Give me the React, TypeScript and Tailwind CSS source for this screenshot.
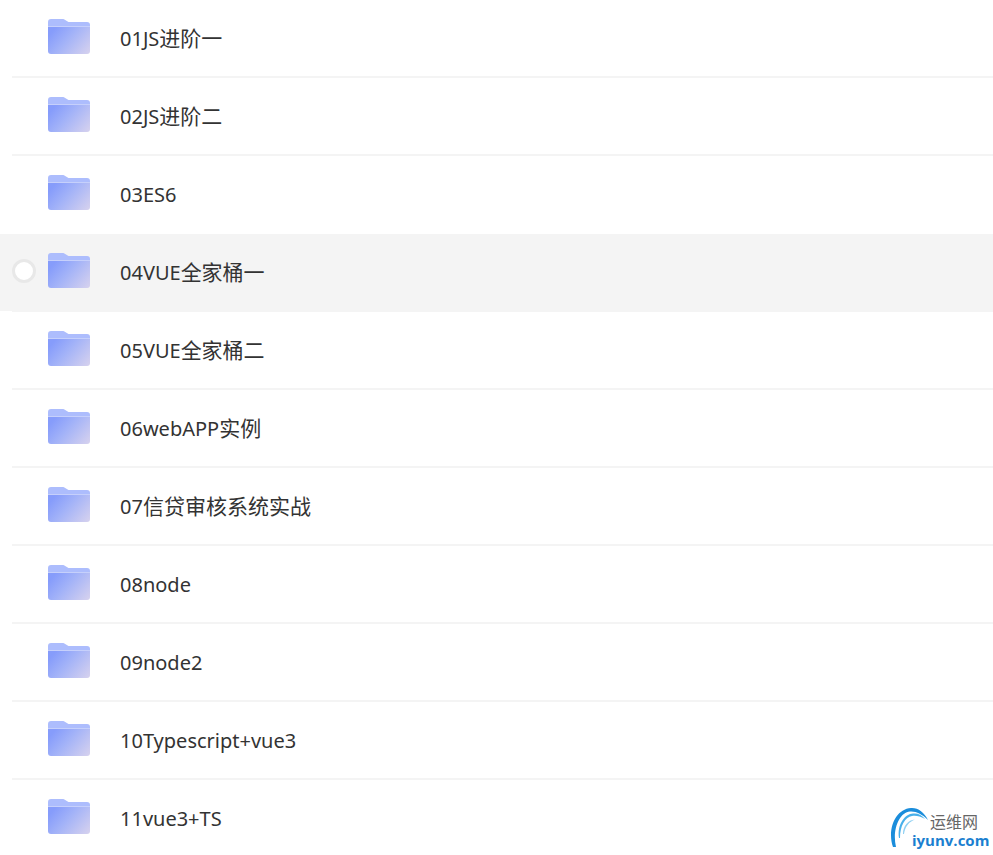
import React from "react";

const rows = [
  "01JS进阶一",
  "02JS进阶二",
  "03ES6",
  "04VUE全家桶一",
  "05VUE全家桶二",
  "06webAPP实例",
  "07信贷审核系统实战",
  "08node",
  "09node2",
  "10Typescript+vue3",
  "11vue3+TS",
];

function Folder({ id }: { id: number }) {
  return (
    <svg width="42" height="35" viewBox="0 0 42 35" className="mb-[3px] block shrink-0">
      <defs>
        <linearGradient id={`f${id}`} x1="0.02" y1="0.3" x2="1" y2="0.85">
          <stop offset="0" stopColor="#869cfb" />
          <stop offset="0.4" stopColor="#a2b2f8" />
          <stop offset="1" stopColor="#d2cfef" />
        </linearGradient>
      </defs>
      <path d="M0 3a3 3 0 0 1 3-3h11c2 0 3 .6 4 1.600L20.500 3H39a3 3 0 0 1 3 3V12H0z" fill="#adbdfd" />
      <path d="M0 8h42V32a3 3 0 0 1-3 3H3a3 3 0 0 1-3-3z" fill={`url(#f${id})`} />
      <rect x="0" y="7" width="42" height="1" fill="#c6d0fb" />
    </svg>
  );
}

function Label({ text }: { text: string }) {
  const parts = text.split(/([\u4e00-\u9fff]+)/).filter(Boolean);
  return (
    <span className="whitespace-nowrap">
      {parts.map((p, i) =>
        /[\u4e00-\u9fff]/.test(p) ? (
          <span key={i} className="text-[21px]">
            {p}
          </span>
        ) : (
          <span key={i}>{p}</span>
        )
      )}
    </span>
  );
}

function Logo() {
  return (
    <div className="absolute left-[889px] top-[806px] h-[46px] w-[104px]">
      <svg width="46" height="46" viewBox="0 0 46 46" className="absolute left-0 top-0">
        <path d="M4 41C-2 24 6 3 22 2C29 1.500 35 6 39 14C33 8 27 5 21 5.500C10 6.500 3 24 7 41Z" fill="#1b8ddb" />
        <path d="M10 32C8 18 16 8 24 7.500C29 7 33 9 36 13C31 10 27 9.500 23 10C16 11 11 20 11 32Z" fill="#48b0ea" />
        <path d="M14 28C14 20 19 14 26 13.500C20 15.500 16 21 15 28Z" fill="#8fd0f2" />
      </svg>
      <span className="absolute left-[41px] top-[7px] whitespace-nowrap text-[16px] leading-[16px] text-[#666] font-['Noto_Sans_CJK_SC',sans-serif]">
        运维网
      </span>
      <span className="absolute left-[23px] top-[26px] whitespace-nowrap text-[15px] leading-[16px] font-bold text-[#1b7fd0] font-['Open_Sans',sans-serif]">
        iyunv.com
      </span>
    </div>
  );
}

export default function App() {
  return (
    <div className="relative h-[855px] w-[993px] overflow-hidden bg-white font-['Noto_Sans','Noto_Sans_CJK_SC',sans-serif] text-[20px] text-[#333]">
      {rows.map((r, i) => {
        const hovered = i === 3;
        const noLine = i === 2;
        return (
          <div key={r} className="flex h-[78px]">
            <div className={hovered ? "h-[77px] w-3 shrink-0 bg-[#f4f4f4]" : "w-3 shrink-0"} />
            <div
              className={
                hovered
                  ? "flex flex-1 items-center border-b-2 border-[#f4f4f4] bg-[#f4f4f4]"
                  : noLine
                    ? "flex flex-1 items-center border-b-2 border-transparent"
                    : "flex flex-1 items-center border-b-2 border-[#f4f4f4]"
              }
            >
              <div className="mb-[2px] w-9 shrink-0">
                {hovered && (
                  <span className="block h-6 w-6 rounded-full border-[3px] border-[#e8e8e8] bg-white" />
                )}
              </div>
              <Folder id={i} />
              <div className="ml-[30px] mt-[2px]">
                <Label text={r} />
              </div>
            </div>
          </div>
        );
      })}
      <Logo />
    </div>
  );
}
